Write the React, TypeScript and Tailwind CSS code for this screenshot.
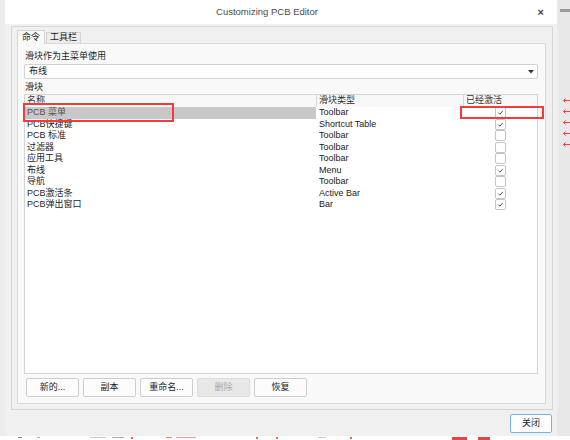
const font = { fontFamily: '"Liberation Sans", "Noto Sans CJK SC", sans-serif' };

const rows = [
  { name: 'PCB 菜单', type: 'Toolbar', on: true },
  { name: 'PCB快捷键', type: 'Shortcut Table', on: true },
  { name: 'PCB 标准', type: 'Toolbar', on: false },
  { name: '过滤器', type: 'Toolbar', on: false },
  { name: '应用工具', type: 'Toolbar', on: false },
  { name: '布线', type: 'Menu', on: true },
  { name: '导航', type: 'Toolbar', on: false },
  { name: 'PCB激活条', type: 'Active Bar', on: true },
  { name: 'PCB弹出窗口', type: 'Bar', on: true },
];

const buttons = ['新的...', '副本', '重命名...', '删除', '恢复'];

function Check({ on }: { on: boolean }) {
  return (
    <div className="h-[11px] w-[11px] rounded-[2px] border border-[#c4c4c4] bg-white">
      {on && (
        <svg width="9" height="9" viewBox="0 0 9 9">
          <path d="M2.3 4.6 L3.9 6.2 L6.8 2.9" fill="none" stroke="#555" strokeWidth="1" />
        </svg>
      )}
    </div>
  );
}

function Arrow() {
  return (
    <svg width="7" height="5" viewBox="0 0 7 5">
      <path d="M0.5 2.5 H7" stroke="#f04040" strokeWidth="1" />
      <path d="M2.5 0.5 L0.5 2.5 L2.5 4.5" fill="none" stroke="#f04040" strokeWidth="1" />
    </svg>
  );
}

export default function App() {
  return (
    <div className="relative flex h-[440px] w-[570px] flex-col overflow-hidden bg-white text-[9px] text-[#1e1e1e]" style={font}>
      <div className="flex h-[436px]">
        <div className="w-[5px] bg-[#ececec]" />

        <div className="flex w-[552px] flex-col bg-[#f0f0f0]">
          <div className="relative flex h-[24px] items-center justify-center bg-white pr-[28px]">
            <span className="text-[9.5px] text-[#4a4a4a]">Customizing PCB Editor</span>
            <span className="absolute right-[13px] top-[4px] text-[11px] font-bold text-[#444]">×</span>
          </div>

          <div className="pt-[2px]">
            <div className="ml-[6px] h-[384px] w-[542px] border border-[#d6d6d6] pt-[3px]">
              <div className="ml-[5px] flex h-[13px] items-end">
                <div className="relative z-10 -mb-px flex h-[14px] w-[28px] items-center justify-center border border-b-0 border-[#d4d4d4] bg-[#f9f9f9]">
                  命令
                </div>
                <div className="ml-px flex h-[11px] w-[35px] items-center justify-center border border-b-0 border-[#d4d4d4] bg-[#ececec]">
                  工具栏
                </div>
              </div>

              <div className="ml-[5px] flex h-[361px] w-[529px] flex-col border border-[#d9d9d9] bg-[#f9f9f9] pt-[7px]">
                <div className="flex h-[12px] items-center pl-[7px]">滑块作为主菜单使用</div>
                <div className="ml-[6px] mt-px flex h-[15px] w-[514px] items-center justify-between rounded-[2px] border border-[#d2d2d2] bg-white pl-[4px] pr-[3px]">
                  <span>布线</span>
                  <svg width="6" height="4" viewBox="0 0 6 4">
                    <path d="M0 0 H6 L3 3.5 Z" fill="#333" />
                  </svg>
                </div>
                <div className="mt-[3px] flex h-[12px] items-center pl-[7px]">滑块</div>

                <div className="ml-[6px] flex h-[280px] w-[514px] flex-col border border-[#d4d4d4] bg-white">
                  <div className="flex h-[12px] bg-[#f8f8f8] text-[#333]">
                    <div className="flex w-[291px] items-start pl-[2px] leading-[10px]">名称</div>
                    <div className="flex w-[147px] items-start border-l border-[#d8d8d8] pl-[2px] leading-[10px]">滑块类型</div>
                    <div className="flex flex-1 items-start border-l border-[#d8d8d8] pl-[2px] leading-[10px]">已经激活</div>
                  </div>
                  {rows.map((r, i) => (
                    <div className="flex h-[11.5px]" key={r.name}>
                      <div className={i === 0 ? 'flex w-[291px] items-center bg-[#c8c8c8] pl-[2px] text-[#555]' : 'flex w-[291px] items-center pl-[2px]'}>
                        {r.name}
                      </div>
                      <div className="flex w-[147px] items-center pl-[3px] text-[#222]">{r.type}</div>
                      <div className="flex flex-1 items-center justify-center">
                        <Check on={r.on} />
                      </div>
                    </div>
                  ))}
                </div>

                <div className="ml-[8px] mt-[4px] flex gap-[4px]">
                  {buttons.map((b) => (
                    <div
                      className={
                        b === '删除'
                          ? 'flex h-[19px] w-[53px] items-center justify-center rounded-[2px] border border-[#dcdcdc] bg-[#e8e8e8] text-[#a8a8a8]'
                          : 'flex h-[19px] w-[53px] items-center justify-center rounded-[2px] border border-[#cdcdcd] bg-[#fcfcfc]'
                      }
                      key={b}
                    >
                      {b}
                    </div>
                  ))}
                </div>
              </div>
            </div>

            <div className="mr-[5px] mt-[4px] flex justify-end">
              <div className="flex h-[19px] w-[42px] items-center justify-center rounded-[2px] border border-[#7ab0e8] bg-[#fdfdfd]">
                关闭
              </div>
            </div>
          </div>
        </div>

        <div className="flex w-[13px] flex-col bg-[#e8e8e8]">
          <div className="ml-[3px] mt-[9px] h-[3px] w-[10px] bg-[#9a9a9a]" />
          <div className="ml-[6px] mt-[86px] flex flex-col gap-[6px]">
            <Arrow />
            <Arrow />
            <Arrow />
            <Arrow />
            <Arrow />
          </div>
        </div>
      </div>

      <div className="flex h-[4px] items-start bg-white pt-[1px]">
        <div className="ml-[18px] h-px w-[4px] bg-[#888]" />
        <div className="ml-[15px] h-px w-[3px] bg-[#aab]" />
        <div className="ml-[50px] h-px w-[16px] bg-[#ccc]" />
        <div className="ml-[6px] h-px w-[12px] bg-[#aaa]" />
        <div className="ml-[7px] h-[2px] w-[2px] bg-[#f06060]" />
        <div className="ml-[33px] h-px w-[6px] bg-[#f08080]" />
        <div className="ml-[4px] h-px w-[20px] bg-[#e0a0a0]" />
        <div className="ml-[60px] h-[2px] w-[2px] bg-[#f06060]" />
        <div className="ml-[18px] h-[2px] w-[2px] bg-[#f06060]" />
        <div className="ml-[40px] h-px w-[8px] bg-[#ccc]" />
        <div className="ml-[24px] h-[2px] w-[2px] bg-[#f06060]" />
        <div className="ml-[100px] h-[3px] w-[15px] bg-[#f04040]" />
        <div className="ml-[11px] h-[3px] w-[12px] bg-[#f04040]" />
      </div>

      <div className="absolute left-[23px] top-[103px] h-[19px] w-[151px] border-2 border-[#f53a3a]" />
      <div className="absolute left-[460px] top-[106px] h-[13px] w-[84px] border-2 border-[#f53a3a]" />
    </div>
  );
}
